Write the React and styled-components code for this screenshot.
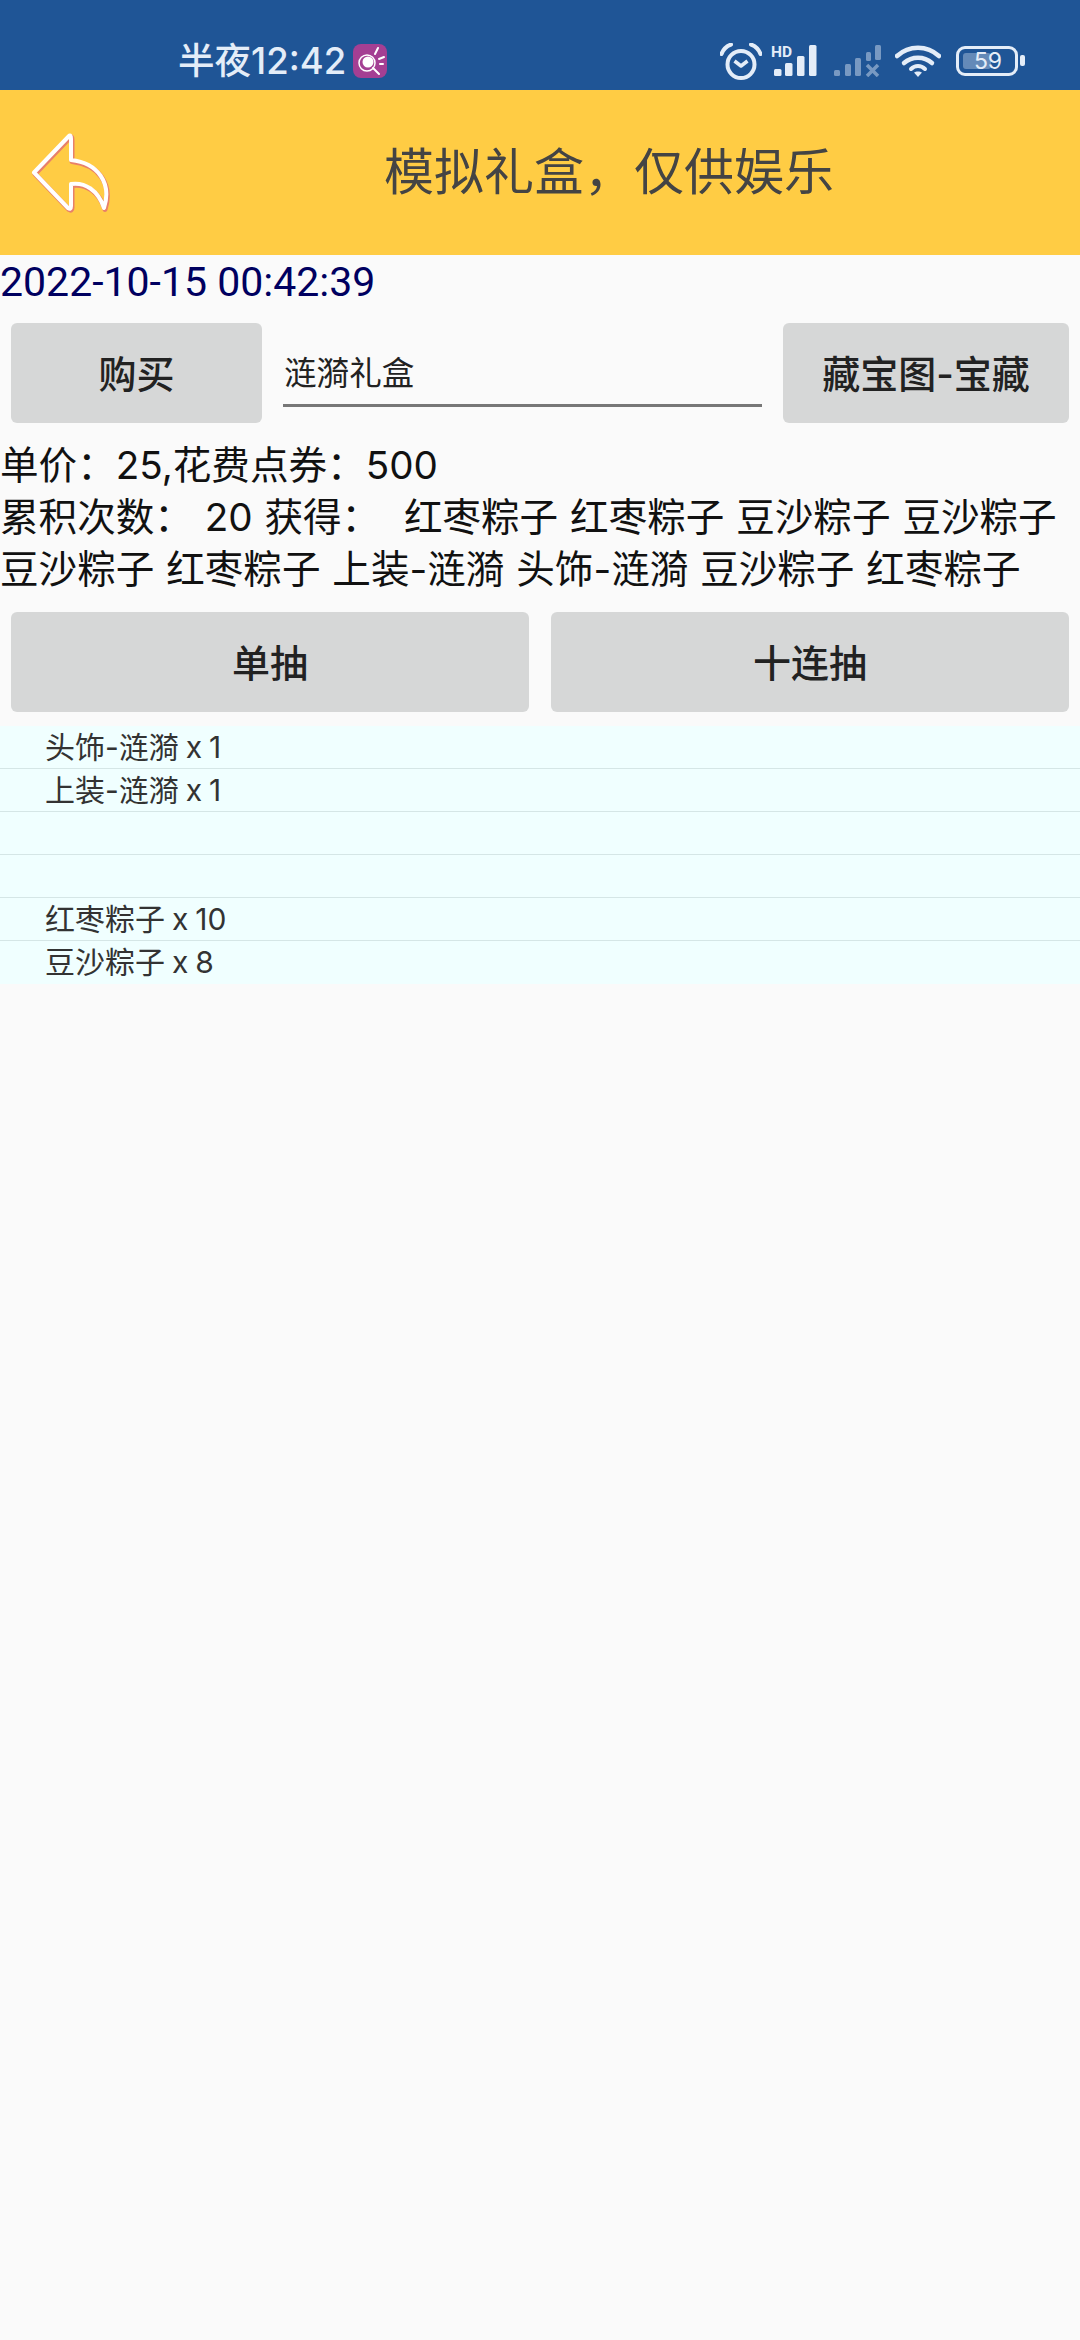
import styled, { createGlobalStyle } from "styled-components";

const GlobalStyle = createGlobalStyle`
  html, body {
    margin: 0;
    padding: 0;
    background: #fafafa;
  }
  body {
    font-family: Inter, "Noto Sans CJK SC", sans-serif;
  }
`;

const Page = styled.div`
  width: 1080px;
  height: 2340px;
  background: #fafafa;
  overflow: hidden;
`;

const StatusBar = styled.div`
  height: 90px;
  box-sizing: border-box;
  background: #1f5596;
  display: flex;
  align-items: center;
  padding: 32px 55px 0 178px;
  color: #e4edf8;
`;

const Clock = styled.div`
  font-size: 36.5px;
  line-height: 46px;
  font-weight: 500;
  white-space: nowrap;
`;

const StatusIcons = styled.div`
  margin-left: auto;
  display: flex;
  align-items: center;
`;

const NotifyIcon = styled.svg`
  margin-left: 7px;
`;

const StatusIcon = styled.svg`
  display: block;
  margin-left: ${(p) => p.$gap || 0}px;
`;

const Battery = styled.div`
  position: relative;
  margin-left: 15px;
  width: 62px;
  height: 30px;
  box-sizing: border-box;
  border: 3px solid #e4edf8;
  border-radius: 9px;
  display: flex;
  align-items: center;
  justify-content: center;
  font-size: 23px;
  line-height: 24px;
  padding-left: 2px;
  margin-right: 7px;
  &::before {
    content: "";
    position: absolute;
    left: 4px;
    top: 4px;
    bottom: 4px;
    width: 28px;
    border-radius: 3px;
    background: rgba(228, 237, 248, 0.35);
  }
  &::after {
    content: "";
    position: absolute;
    right: -10px;
    top: 6px;
    width: 5px;
    height: 11px;
    border-radius: 2px;
    background: #e4edf8;
  }
`;

const Header = styled.div`
  height: 165px;
  background: #ffcc44;
  display: flex;
  align-items: center;
  padding-left: 30px;
`;

const Title = styled.div`
  flex: 1;
  text-align: center;
  font-size: 50px;
  color: #444;
  padding-left: 28px;
  padding-bottom: 9px;
`;

const DateLine = styled.div`
  font-family: Roboto, "Noto Sans CJK SC", sans-serif;
  font-size: 41px;
  line-height: 54px;
  color: #000060;
  padding-bottom: 14px;
`;

const Row = styled.div`
  display: flex;
  align-items: stretch;
  padding: 0 11px;
  gap: ${(p) => p.$gap || 22}px;
`;

const Button = styled.div`
  flex: ${(p) => (p.$w ? `0 0 ${p.$w}px` : 1)};
  height: 100px;
  box-sizing: border-box;
  padding-bottom: 4px;
  background: #d6d7d7;
  border-radius: 6px;
  display: flex;
  align-items: center;
  justify-content: center;
  font-size: 38px;
  font-weight: 500;
  color: #222;
  white-space: nowrap;
`;

const NameField = styled.div`
  flex: 1;
  height: 84px;
  box-sizing: border-box;
  border-bottom: 3px solid #777;
  font-size: 32.6px;
  line-height: 71px;
  padding: 15px 0 0 1px;
  color: #222;
`;

const Info = styled.div`
  font-size: 38.6px;
  line-height: 52px;
  word-spacing: 1px;
  color: #111;
  padding: 16px 0 17px;
  white-space: pre-wrap;
`;

const List = styled.div`
  margin-top: 14px;
  background: #f0ffff;
`;

const ListRow = styled.div`
  height: 43px;
  box-sizing: border-box;
  padding-left: 45px;
  font-size: 30px;
  line-height: 42px;
  word-spacing: -1.5px;
  color: #333;
  border-bottom: 1px solid #d5e6e6;
  &:last-child {
    border-bottom: 0;
  }
`;

const rewards = ["头饰-涟漪 x 1", "上装-涟漪 x 1", "", "", "红枣粽子 x 10", "豆沙粽子 x 8"];

const infoText = `单价：25,花费点券：500
累积次数： 20 获得：  红枣粽子 红枣粽子 豆沙粽子 豆沙粽子 豆沙粽子 红枣粽子 上装-涟漪 头饰-涟漪 豆沙粽子 红枣粽子`;

const backPath = "M39 3L4 39.5L38 75Q41 77 41 73L41 51C55 49 68 57 74 75C82 50 68 30 41 27L41 6Q41 1 39 3Z";

export default function App() {
  return (
    <Page>
      <GlobalStyle />
      <StatusBar>
        <Clock>半夜12:42</Clock>
        <NotifyIcon width="34" height="34" viewBox="0 0 34 34">
          <rect width="34" height="34" rx="8" fill="#a43f93" />
          <circle cx="14" cy="19" r="8" fill="none" stroke="#fff" strokeWidth="1.5" />
          <circle cx="15" cy="18" r="5.5" fill="#fff" />
          <path d="M20 24l6 6M22 10l3-6M26 15l5-2M27 20h3" stroke="#fff" strokeWidth="2" strokeLinecap="round" />
        </NotifyIcon>
        <StatusIcons>
          <StatusIcon width="42" height="37" viewBox="0 0 42 37">
            <circle cx="21" cy="21.5" r="13.5" fill="none" stroke="#e4edf8" strokeWidth="4" />
            <path d="M14.5 18l6.5 5 6.5-5" fill="none" stroke="#e4edf8" strokeWidth="3.5" strokeLinejoin="round" />
            <path d="M1.5 11Q4 4 11 1.5M40.5 11Q38 4 31 1.5" fill="none" stroke="#e4edf8" strokeWidth="4" strokeLinecap="round" />
          </StatusIcon>
          <StatusIcon $gap="9" width="50" height="40" viewBox="0 -4 50 40">
            <text x="0" y="11.5" fontSize="15.5" fontWeight="700" fill="#e4edf8" fontFamily="Roboto, sans-serif">HD</text>
            <rect x="3" y="24" width="7.5" height="7" rx="1.5" fill="#e4edf8" />
            <rect x="14" y="18" width="7.5" height="13" rx="1.5" fill="#e4edf8" />
            <rect x="26" y="11" width="7.5" height="20" rx="1.5" fill="#e4edf8" />
            <rect x="38" y="0" width="7.5" height="31" rx="1.5" fill="#e4edf8" />
          </StatusIcon>
          <StatusIcon $gap="13" width="47" height="32" viewBox="0 0 47 32" opacity="0.45">
            <rect x="0" y="25" width="6" height="6" rx="1.5" fill="#e4edf8" />
            <rect x="11" y="19" width="6" height="12" rx="1.5" fill="#e4edf8" />
            <rect x="21" y="13" width="6" height="18" rx="1.5" fill="#e4edf8" />
            <rect x="32" y="7" width="5" height="9" rx="1.5" fill="#e4edf8" />
            <rect x="41" y="0" width="6" height="15" rx="1.5" fill="#e4edf8" />
            <path d="M33 20l11 11M44 20L33 31" stroke="#e4edf8" strokeWidth="3.5" />
          </StatusIcon>
          <StatusIcon $gap="14" width="46" height="32" viewBox="0 0 46 32">
            <path d="M2 11C14 0 32 0 44 11" fill="none" stroke="#e4edf8" strokeWidth="4.5" strokeLinecap="round" />
            <path d="M9 18C17 11 29 11 37 18" fill="none" stroke="#e4edf8" strokeWidth="4.5" strokeLinecap="round" />
            <path d="M16 24C20 20 26 20 30 24" fill="none" stroke="#e4edf8" strokeWidth="4" strokeLinecap="round" />
            <path d="M19 27.5C21 26 25 26 27 27.5L23 32Z" fill="#e4edf8" />
          </StatusIcon>
          <Battery>59</Battery>
        </StatusIcons>
      </StatusBar>

      <Header>
        <svg width="80" height="80" viewBox="0 0 80 80">
          <path d={backPath} fill="none" stroke="#e8806a" strokeWidth="5" strokeLinejoin="round" transform="translate(1 1.5)" />
          <path d={backPath} fill="none" stroke="#fff" strokeWidth="4" strokeLinejoin="round" />
        </svg>
        <Title>模拟礼盒，仅供娱乐</Title>
      </Header>

      <DateLine>2022-10-15 00:42:39</DateLine>

      <Row $gap="21">
        <Button $w="251">购买</Button>
        <NameField>涟漪礼盒</NameField>
        <Button $w="286">藏宝图-宝藏</Button>
      </Row>

      <Info>{infoText}</Info>

      <Row>
        <Button>单抽</Button>
        <Button>十连抽</Button>
      </Row>

      <List>
        {rewards.map((r, i) => (
          <ListRow key={i}>{r}</ListRow>
        ))}
      </List>
    </Page>
  );
}
